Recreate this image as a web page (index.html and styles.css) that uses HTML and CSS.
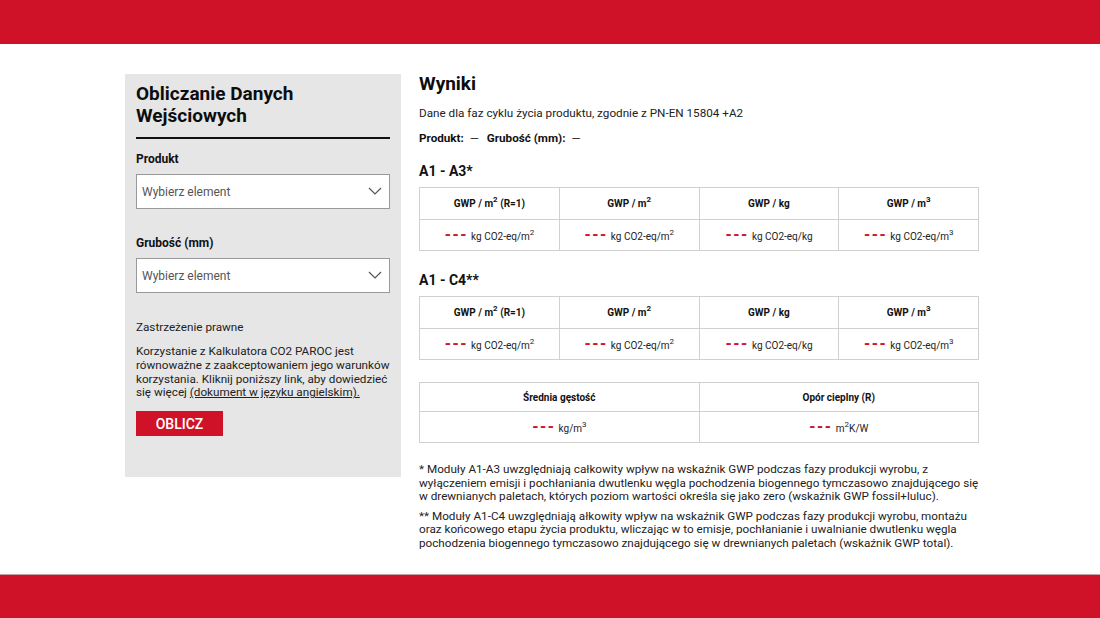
FILE: index.html
```html
<!DOCTYPE html>
<html lang="pl">
<head>
<meta charset="utf-8">
<title>Kalkulator CO2 PAROC</title>
<link rel="stylesheet" href="styles.css">
</head>
<body>
<header class="topbar"></header>
<main class="main">
  <aside class="panel">
    <h2 class="panel-title">Obliczanie Danych Wejściowych</h2>
    <label class="field-label">Produkt</label>
    <div class="select">
      <span>Wybierz element</span>
      <svg class="chev" width="14" height="8" viewBox="0 0 14 8"><path d="M1 1 L7 7 L13 1" fill="none" stroke="#555" stroke-width="1.2"/></svg>
    </div>
    <label class="field-label second">Grubość (mm)</label>
    <div class="select">
      <span>Wybierz element</span>
      <svg class="chev" width="14" height="8" viewBox="0 0 14 8"><path d="M1 1 L7 7 L13 1" fill="none" stroke="#555" stroke-width="1.2"/></svg>
    </div>
    <p class="legal-title">Zastrzeżenie prawne</p>
    <p class="legal">Korzystanie z Kalkulatora CO2 PAROC jest równoważne z zaakceptowaniem jego warunków korzystania. Kliknij poniższy link, aby dowiedzieć się więcej <a href="#">(dokument w języku angielskim).</a></p>
    <button class="btn">OBLICZ</button>
  </aside>
  <section class="results">
    <h1 class="res-title">Wyniki</h1>
    <p class="desc">Dane dla faz cyklu życia produktu, zgodnie z PN-EN 15804 +A2</p>
    <p class="meta"><b>Produkt:</b> <span class="dash">—</span> <b>Grubość (mm):</b> <span class="dash">—</span></p>

    <h3 class="sec">A1 - A3*</h3>
    <table class="tbl">
      <tr><th>GWP / m<sup>2</sup> (R=1)</th><th>GWP / m<sup>2</sup></th><th>GWP / kg</th><th>GWP / m<sup>3</sup></th></tr>
      <tr><td><span class="nv">---</span> kg CO2-eq/m<sup>2</sup></td><td><span class="nv">---</span> kg CO2-eq/m<sup>2</sup></td><td><span class="nv">---</span> kg CO2-eq/kg</td><td><span class="nv">---</span> kg CO2-eq/m<sup>3</sup></td></tr>
    </table>

    <h3 class="sec sec2">A1 - C4**</h3>
    <table class="tbl">
      <tr><th>GWP / m<sup>2</sup> (R=1)</th><th>GWP / m<sup>2</sup></th><th>GWP / kg</th><th>GWP / m<sup>3</sup></th></tr>
      <tr><td><span class="nv">---</span> kg CO2-eq/m<sup>2</sup></td><td><span class="nv">---</span> kg CO2-eq/m<sup>2</sup></td><td><span class="nv">---</span> kg CO2-eq/kg</td><td><span class="nv">---</span> kg CO2-eq/m<sup>3</sup></td></tr>
    </table>

    <table class="tbl tbl3">
      <tr><th>Średnia gęstość</th><th>Opór cieplny (R)</th></tr>
      <tr><td><span class="nv">---</span> kg/m<sup>3</sup></td><td><span class="nv">---</span> m<sup>2</sup>K/W</td></tr>
    </table>

    <p class="note first">* Moduły A1-A3 uwzględniają całkowity wpływ na wskaźnik GWP podczas fazy produkcji wyrobu, z wyłączeniem emisji i pochłaniania dwutlenku węgla pochodzenia biogennego tymczasowo znajdującego się w drewnianych paletach, których poziom wartości określa się jako zero (wskaźnik GWP fossil+luluc).</p>
    <p class="note">** Moduły A1-C4 uwzględniają ałkowity wpływ na wskaźnik GWP podczas fazy produkcji wyrobu, montażu oraz końcowego etapu życia produktu, wliczając w to emisje, pochłanianie i uwalnianie dwutlenku węgla pochodzenia biogennego tymczasowo znajdującego się w drewnianych paletach (wskaźnik GWP total).</p>
  </section>
</main>
<footer class="bottombar"></footer>
</body>
</html>
```
FILE: styles.css
```css
* { box-sizing: border-box; }
html, body { margin: 0; padding: 0; }
body {
  font-family: Roboto, "Liberation Sans", Arial, sans-serif;
  color: #222;
  background: #fff;
  width: 1100px;
  height: 618px;
  overflow: hidden;
  display: flex;
  flex-direction: column;
}
.topbar { height: 44px; background: #cf1228; flex: none; }
.bottombar { height: 44px; background: #cf1228; flex: none; border-top: 1px solid #c9a0a5; }
.main {
  flex: 1;
  display: flex;
  align-items: flex-start;
  gap: 18px;
  padding: 30px 0 0 125px;
}
.panel {
  width: 276px;
  background: #e6e6e6;
  padding: 9px 11px 41px 11px;
}
.panel-title {
  margin: 0;
  font-size: 19px;
  line-height: 22px;
  font-weight: 700;
  color: #0d0d0d;
  padding-bottom: 10px;
  border-bottom: 2px solid #111;
}
.field-label {
  display: block;
  font-size: 12px;
  line-height: 14px;
  font-weight: 700;
  color: #111;
  margin: 13px 0 8px;
}
.field-label.second { margin-top: 27px; }
.select {
  height: 35px;
  background: #fff;
  border: 1px solid #999;
  display: flex;
  align-items: center;
  justify-content: space-between;
  padding: 0 6px 0 5px;
  font-size: 12px;
  color: #555;
}
.chev { margin-right: 1px; margin-top: -1px; }
.legal-title {
  margin: 27px 0 0;
  font-size: 11.7px;
  line-height: 14px;
  color: #222;
}
.legal {
  margin: 11px 0 0;
  font-size: 11.7px;
  line-height: 13.8px;
  color: #222;
}
.legal a { color: #222; text-decoration: underline; }
.btn {
  display: block;
  margin-top: 11px;
  width: 87px;
  height: 25px;
  border: none;
  background: #cf1228;
  color: #fff;
  font-family: Roboto, "Liberation Sans", Arial, sans-serif;
  font-size: 14px;
  font-weight: 500;
  padding: 0;
}
.results { width: 560px; }
.res-title {
  margin: 0;
  font-size: 19px;
  line-height: 20px;
  font-weight: 700;
  color: #0d0d0d;
}
.desc {
  margin: 12px 0 0;
  font-size: 11.7px;
  line-height: 14px;
}
.meta {
  margin: 11px 0 0;
  font-size: 11.7px;
  line-height: 14px;
}
.meta b { font-weight: 700; color: #111; }
.meta .dash { margin: 0 5px 0 3px; }
.sec {
  margin: 18px 0 8px;
  font-size: 14px;
  line-height: 16px;
  font-weight: 700;
  color: #111;
}
.sec2 { margin-top: 21px; }
.tbl {
  width: 100%;
  border-collapse: collapse;
  table-layout: fixed;
  border: 1px solid #c4c4c4;
}
.tbl th, .tbl td {
  border: 1px solid #d0d0d0;
  text-align: center;
  height: 32px;
  padding: 0 4px;
  font-size: 10px;
  color: #222;
}
.tbl tr + tr td { height: 31px; }
.tbl th { font-weight: 700; color: #111; }
.tbl sup { font-size: 8px; vertical-align: 5px; line-height: 0; }
.nv {
  color: #d0142c;
  font-weight: 900;
  font-size: 15px;
  letter-spacing: 1px;
  margin-right: 1px;
}
.tbl3 { margin-top: 22px; }
.tbl3 th { height: 29px; }
.note {
  margin: 6px 0 0;
  font-size: 11.7px;
  line-height: 13.6px;
  color: #222;
}
.note.first { margin-top: 20px; }
```
